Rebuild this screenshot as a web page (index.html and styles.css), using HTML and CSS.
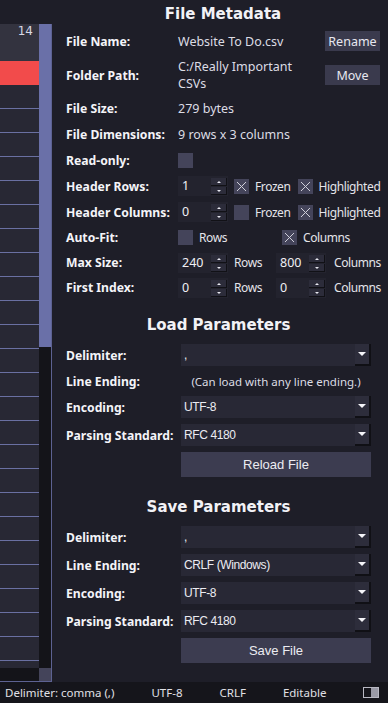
FILE: index.html
```html
<!DOCTYPE html>
<html lang="en">
<head>
    <meta charset="UTF-8">
    <meta name="viewport" content="width=device-width, initial-scale=1.0">
    <title>CSV Editor - File Metadata</title>
    <link rel="stylesheet" href="styles.css">
</head>
<body>

<div class="app">
    <div class="main">
        <!-- table preview on the left -->
        <div class="table-pane">
            <div class="table">
                <div class="table-body">
                    <div class="cells">
                        <div class="cell head">14</div>
                        <div class="cell selected"></div>
                        <div class="cell"></div><div class="cell"></div><div class="cell"></div><div class="cell"></div>
                        <div class="cell"></div><div class="cell"></div><div class="cell"></div><div class="cell"></div>
                        <div class="cell"></div><div class="cell"></div><div class="cell"></div><div class="cell"></div>
                        <div class="cell"></div><div class="cell"></div><div class="cell"></div><div class="cell"></div>
                        <div class="cell"></div><div class="cell"></div><div class="cell"></div><div class="cell"></div>
                        <div class="cell"></div><div class="cell"></div><div class="cell"></div><div class="cell"></div>
                    </div>
                    <div class="vscroll"><div class="vhandle"></div></div>
                </div>
                <div class="hscroll"><div class="htrack"></div><div class="corner"></div></div>
            </div>
        </div>

        <div class="panel">
            <h2 class="section-title">File Metadata</h2>

            <div class="row">
                <div class="label">File Name:</div>
                <div class="value">Website To Do.csv</div>
                <button class="small-btn">Rename</button>
            </div>
            <div class="row tall">
                <div class="label">Folder Path:</div>
                <div class="value lines">C:/Really Important<br>CSVs</div>
                <button class="small-btn">Move</button>
            </div>
            <div class="row short">
                <div class="label">File Size:</div>
                <div class="value">279 bytes</div>
            </div>
            <div class="row">
                <div class="label">File Dimensions:</div>
                <div class="value">9 rows x 3 columns</div>
            </div>
            <div class="row">
                <div class="label">Read-only:</div>
                <div class="check"></div>
            </div>
            <div class="row">
                <div class="label">Header Rows:</div>
                <div class="opts">
                    <div class="spin"><span>1</span><div class="spin-btns"><i class="up"></i><i class="down"></i></div></div>
                    <div class="check on"><svg viewBox="0 0 15 15"><path d="M3 3L12 12M12 3L3 12"/></svg></div>
                    <span class="frozen">Frozen</span>
                    <div class="check on"><svg viewBox="0 0 15 15"><path d="M3 3L12 12M12 3L3 12"/></svg></div>
                    <span>Highlighted</span>
                </div>
            </div>
            <div class="row">
                <div class="label">Header Columns:</div>
                <div class="opts">
                    <div class="spin"><span>0</span><div class="spin-btns"><i class="up"></i><i class="down"></i></div></div>
                    <div class="check"></div>
                    <span class="frozen">Frozen</span>
                    <div class="check on"><svg viewBox="0 0 15 15"><path d="M3 3L12 12M12 3L3 12"/></svg></div>
                    <span>Highlighted</span>
                </div>
            </div>
            <div class="row short">
                <div class="label">Auto-Fit:</div>
                <div class="fit">
                    <div class="opts"><div class="check"></div><span>Rows</span></div>
                    <div class="opts"><div class="check on"><svg viewBox="0 0 15 15"><path d="M3 3L12 12M12 3L3 12"/></svg></div><span>Columns</span></div>
                </div>
            </div>
            <div class="row short">
                <div class="label">Max Size:</div>
                <div class="sizes">
                    <div class="spin"><span>240</span><div class="spin-btns"><i class="up"></i><i class="down"></i></div></div>
                    <span class="unit">Rows</span>
                    <div class="spin"><span>800</span><div class="spin-btns"><i class="up"></i><i class="down"></i></div></div>
                    <span class="unit last">Columns</span>
                </div>
            </div>
            <div class="row short">
                <div class="label">First Index:</div>
                <div class="sizes">
                    <div class="spin"><span>0</span><div class="spin-btns"><i class="up"></i><i class="down"></i></div></div>
                    <span class="unit">Rows</span>
                    <div class="spin"><span>0</span><div class="spin-btns"><i class="up"></i><i class="down"></i></div></div>
                    <span class="unit last">Columns</span>
                </div>
            </div>

            <div class="params load">
                <h2 class="section-title">Load Parameters</h2>
                <div class="row">
                    <div class="label">Delimiter:</div>
                    <div class="dropdown"><span>,</span><i></i></div>
                </div>
                <div class="row note-row">
                    <div class="label">Line Ending:</div>
                    <div class="note">(Can load with any line ending.)</div>
                </div>
                <div class="row">
                    <div class="label">Encoding:</div>
                    <div class="dropdown"><span>UTF-8</span><i></i></div>
                </div>
                <div class="row">
                    <div class="label">Parsing Standard:</div>
                    <div class="dropdown"><span>RFC 4180</span><i></i></div>
                </div>
                <button class="wide-btn">Reload File</button>
            </div>

            <div class="params save">
                <h2 class="section-title">Save Parameters</h2>
                <div class="row">
                    <div class="label">Delimiter:</div>
                    <div class="dropdown"><span>,</span><i></i></div>
                </div>
                <div class="row">
                    <div class="label">Line Ending:</div>
                    <div class="dropdown"><span>CRLF (Windows)</span><i></i></div>
                </div>
                <div class="row">
                    <div class="label">Encoding:</div>
                    <div class="dropdown"><span>UTF-8</span><i></i></div>
                </div>
                <div class="row">
                    <div class="label">Parsing Standard:</div>
                    <div class="dropdown"><span>RFC 4180</span><i></i></div>
                </div>
                <button class="wide-btn">Save File</button>
            </div>
        </div>
    </div>

    <div class="status">
        <span>Delimiter: comma (,)</span>
        <span>UTF-8</span>
        <span>CRLF</span>
        <span>Editable</span>
        <div class="toggle"><div class="toggle-fill"></div></div>
    </div>
</div>

</body>
</html>
```

FILE: styles.css
```css
* { margin: 0; padding: 0; box-sizing: border-box; }
body {
    font-family: "Noto Sans", sans-serif;
    font-size: 12.5px;
    background: #1e1e28;
    color: #e4e4ea;
    width: 388px;
    height: 703px;
    overflow: hidden;
}
.app { display: flex; flex-direction: column; height: 703px; }
.main { display: flex; flex: 1; min-height: 0; }

/* left table */
.table-pane { width: 52px; flex: none; padding-top: 24px; display: flex; flex-direction: column; }
.table {
    flex: 1; display: flex; flex-direction: column;
    border-right: 1px solid #5d6292; border-bottom: 1px solid #5d6292;
}
.table-body { flex: 1; display: flex; min-height: 0; }
.cells { width: 39px; overflow: hidden; background: #282834; }
.cell { height: 24px; border-bottom: 1px solid #6a70a2; }
.cell.head {
    height: 37px; border-bottom: none; background: #33333f;
    text-align: right; padding-right: 6px; line-height: 37px;
    font: 12px "DejaVu Sans", sans-serif; color: #d8d8e4;
}
.cell.selected { background: #f24b4b; border-bottom-color: #f24b4b; }
.vscroll { width: 12px; background: #141419; }
.vhandle { height: 323px; background: #6a70a8; }
.hscroll { height: 13px; display: flex; background: #141419; }
.htrack { flex: 1; }
.corner { width: 12px; background: #44445a; }

/* right panel */
.panel { flex: 1; min-width: 0; overflow: hidden; padding: 2px 8px 0 14px; }
.section-title {
    font: bold 15px "DejaVu Sans", sans-serif;
    text-align: center; height: 24px; line-height: 24px; color: #f2f2f6;
    margin-bottom: 2px;
}
.row { display: flex; align-items: center; height: 26px; }
.row.tall { height: 42px; }
.row.short { height: 25px; }
.label { width: 112px; flex: none; font-weight: bold; font-size: 12.2px; color: #f4f4f8; }
.value { flex: 1; color: #dcdce4; }
.value.lines { line-height: 17px; }

.small-btn {
    width: 55px; height: 20px; flex: none;
    background: #3a3a4d; border: none; color: #e8e8f0;
    font: 12.5px "Noto Sans", sans-serif;
}

.check { width: 15px; height: 15px; flex: none; background: #44445a; }
.check svg { display: block; width: 15px; height: 15px; }
.check path { stroke: #d0d0da; stroke-width: 1; fill: none; }

.opts { display: flex; align-items: center; gap: 6px; }
.opts span { font-size: 12px; letter-spacing: -0.4px; white-space: nowrap; }
.opts .frozen { margin-right: 1px; }
.fit { display: grid; grid-template-columns: 104px auto; }

.spin { width: 50px; height: 20px; flex: none; display: flex; background: #23232e; }
.spin span { flex: 1; padding-left: 4px; line-height: 20px; color: #f0f0f4; letter-spacing: 0; font-size: 12.5px; }
.spin-btns { width: 17px; display: flex; flex-direction: column; gap: 1px; padding: 2px 1px 1px 0; }
.spin-btns i {
    flex: 1; background: #2c2c3a; box-shadow: inset -1px -1px 0 #111116;
    position: relative;
}
.spin-btns i::after {
    content: ""; position: absolute; left: 6px; top: 3px;
    border-left: 2px solid transparent; border-right: 2px solid transparent;
}
.spin-btns .up::after { border-bottom: 2px solid #e8e8f0; }
.spin-btns .down::after { border-top: 2px solid #e8e8f0; }

.sizes { display: grid; grid-template-columns: 50px 48px 50px auto; align-items: center; }
.unit { padding-left: 6px; font-size: 12px; letter-spacing: -0.4px; }
.unit.last { padding-left: 8px; }

/* load / save */
.params { margin-right: 9px; }
.params .section-title { margin-bottom: 4px; }
.params .label { width: 115px; }
.params .row { height: 28px; }
.params .row.note-row { height: 24px; }
.load { margin-top: 13px; }
.save { margin-top: 18px; }
.dropdown {
    flex: 1; height: 22px; display: flex; background: #282835;
    font: 12px "Liberation Sans", Arial, sans-serif; letter-spacing: -0.4px; color: #ececf2;
}
.dropdown span { flex: 1; padding-left: 3px; line-height: 22px; }
.dropdown i {
    width: 16px; background: #2d2d3b;
    box-shadow: inset -2px -2px 0 #101015;
    display: flex; align-items: center; justify-content: center;
}
.dropdown i::after {
    content: ""; margin: -2px 2px 0 0;
    border-left: 4px solid transparent; border-right: 4px solid transparent;
    border-top: 4px solid #f4f4f8;
}
.note { flex: 1; text-align: center; color: #dcdce4; font-size: 11.5px; }
.wide-btn {
    display: block; width: 190px; height: 25px; margin: 3px 0 0 115px;
    background: #3c3c50; border: none; color: #ececf2;
    font: 13px "Liberation Sans", Arial, sans-serif;
}

/* status bar */
.status {
    height: 21px; flex: none; display: flex; align-items: center;
    padding: 0 12px 0 5px; background: #15151b;
    font: 11.5px "Noto Sans", sans-serif; color: #e0e0e6;
    white-space: nowrap;
}
.status span { flex: none; margin-right: 37px; }
.toggle {
    margin-left: auto; width: 16px; height: 11px; flex: none;
    border: 1px solid #b8b8c2; display: flex; justify-content: flex-end;
}
.toggle-fill { width: 7px; background: #9a9aa6; }
```
